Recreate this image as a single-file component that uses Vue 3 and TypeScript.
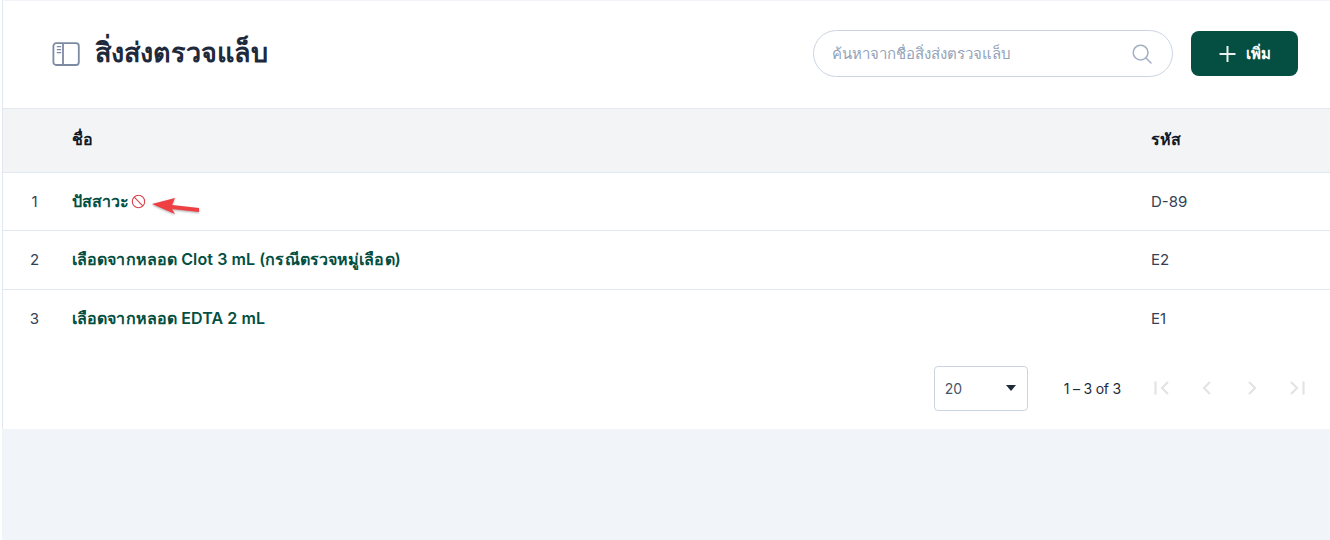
<template>
  <div class="page">
    <section class="card">
      <header class="top">
        <div class="title-wrap">
          <svg class="title-icon" width="28" height="24" viewBox="0 0 28 24" fill="none" stroke="#7c8aa3" stroke-width="1.8">
            <rect x="1.4" y="1.2" width="25.4" height="21.8" rx="2.8" />
            <path d="M11 1.5v21" />
            <path d="M4.8 4.6h4.4M4.8 7.6h4.4M4.8 10.6h4.4" stroke-width="1.2" />
          </svg>
          <h1 class="title">สิ่งส่งตรวจแล็บ</h1>
        </div>
        <div class="actions">
          <div class="search">
            <input class="search-input" type="text" placeholder="ค้นหาจากชื่อสิ่งส่งตรวจแล็บ" />
            <svg width="20" height="20" viewBox="0 0 20 20" fill="none" stroke="#a3afc2" stroke-width="1.5">
              <circle cx="8.6" cy="8.6" r="7.4" />
              <path d="M14 14l5 5" stroke-linecap="round" />
            </svg>
          </div>
          <button class="add-btn" type="button">
            <svg width="17" height="16" viewBox="0 0 17 16" stroke="#e8efec" stroke-width="2" fill="none">
              <path d="M8.5 0v16M0.5 8h16" />
            </svg>
            <span>เพิ่ม</span>
          </button>
        </div>
      </header>

      <table class="grid">
        <thead>
          <tr>
            <th class="col-no"></th>
            <th>ชื่อ</th>
            <th class="col-code">รหัส</th>
          </tr>
        </thead>
        <tbody>
          <tr v-for="(row, i) in rows" :key="row.code">
            <td class="col-no">{{ i + 1 }}</td>
            <td>
              <span class="name">{{ row.name }}</span>
              <span v-if="row.disabled" class="flag">
                <svg width="15" height="15" viewBox="0 0 15 15" fill="none" stroke="#d8404a" stroke-width="1.1">
                  <circle cx="7.5" cy="7.5" r="6.2" />
                  <path d="M3.2 3.2l8.6 8.6" />
                </svg>
                <svg class="arrow" width="50" height="20" viewBox="0 0 50 20">
                  <path d="M0 8L23 2l-3 7 27 3v4l-27-3 3 5z" fill="#ef3f42" />
                </svg>
              </span>
            </td>
            <td class="col-code">{{ row.code }}</td>
          </tr>
        </tbody>
      </table>

      <footer class="pager">
        <div class="size-select">
          <span>20</span>
          <i class="caret"></i>
        </div>
        <span class="range">1 – 3 of 3</span>
        <div class="nav">
          <svg v-for="d in navIcons" :key="d" width="18" height="18" viewBox="0 0 18 18" fill="none" stroke="#e3e3e3" stroke-width="2.2">
            <path :d="d" />
          </svg>
        </div>
      </footer>
    </section>
  </div>
</template>

<script setup lang="ts">
interface Specimen {
  name: string
  code: string
  disabled?: boolean
}

const rows: Specimen[] = [
  { name: 'ปัสสาวะ', code: 'D-89', disabled: true },
  { name: 'เลือดจากหลอด Clot 3 mL (กรณีตรวจหมู่เลือด)', code: 'E2' },
  { name: 'เลือดจากหลอด EDTA 2 mL', code: 'E1' },
]

const navIcons: string[] = [
  'M2.5 2.5v13M15 3L9 9l6 6',
  'M12 3L6 9l6 6',
  'M6 3l6 6-6 6',
  'M3 3l6 6-6 6M15.5 2.5v13',
]
</script>

<style scoped>
.page {
  height: 540px;
  box-sizing: border-box;
  padding-left: 2px;
  background: linear-gradient(#fff, #fff) left / 2px 100% no-repeat, #f1f4f8;
  font-family: Inter, "Noto Sans", Tahoma, sans-serif;
  color: #1e293b;
}

.card {
  height: 429px;
  box-sizing: border-box;
  background: #fff;
  border-top: 1px solid #f1f4f8;
  border-left: 1px solid #e2e8f0;
  display: flex;
  flex-direction: column;
}

.top {
  height: 108px;
  flex: none;
  box-sizing: border-box;
  border-bottom: 1px solid #e2e8f0;
  display: flex;
  align-items: center;
  justify-content: space-between;
  padding: 0 32px 2px 49px;
}

.title-wrap {
  display: flex;
  align-items: center;
  gap: 15px;
}

.title-icon {
  margin-top: 1px;
}

.title {
  margin: 0 0 2px;
  font-size: 27px;
  font-weight: 700;
  line-height: 32px;
  color: #1e293b;
}

.actions {
  display: flex;
  align-items: center;
  gap: 18px;
}

.search {
  width: 360px;
  height: 47px;
  box-sizing: border-box;
  border: 1px solid #cbd5e1;
  border-radius: 24px;
  display: flex;
  align-items: center;
  padding: 0 20px 0 18px;
}

.search-input {
  flex: 1;
  min-width: 0;
  border: 0;
  outline: 0;
  padding: 0;
  background: transparent;
  font: 400 15px Inter, "Noto Sans", Tahoma, sans-serif;
  color: #1e293b;
}

.search-input::placeholder {
  color: #94a3b8;
  opacity: 1;
}

.add-btn {
  width: 107px;
  height: 45px;
  border: 0;
  border-radius: 8px;
  background: #044f41;
  color: #fff;
  display: flex;
  align-items: center;
  justify-content: center;
  gap: 10px;
  font: 600 15px Inter, "Noto Sans", Tahoma, sans-serif;
}

.grid {
  width: 100%;
  border-collapse: collapse;
  table-layout: fixed;
  flex: none;
}

.grid th {
  height: 61px;
  padding: 0 0 2px;
  background: #f3f4f6;
  text-align: left;
  font-size: 16px;
  font-weight: 700;
  color: #111827;
}

.grid td {
  height: 57px;
  padding: 0;
  font-size: 15px;
  border-top: 1px solid #e2e8f0;
  color: #334155;
}

.grid tbody tr:nth-child(2) td {
  height: 57px;
  padding-bottom: 1px;
}

.col-no {
  width: 69px;
  text-align: center;
  padding-right: 6px !important;
  box-sizing: border-box;
}

.col-code {
  width: 179px;
}

.name {
  font-size: 16px;
  font-weight: 600;
  letter-spacing: 0.1px;
  color: #044f41;
}

.flag {
  position: relative;
  display: inline-block;
  width: 15px;
  height: 15px;
  margin-left: 1px;
  vertical-align: -2px;
}

.arrow {
  position: absolute;
  left: 21px;
  top: 2px;
  filter: drop-shadow(0 1px 1px rgba(60, 60, 60, 0.45));
}

.pager {
  flex: 1;
  display: flex;
  align-items: center;
  justify-content: flex-end;
  padding: 0 24px 0 0;
  font-size: 14px;
}

.size-select {
  width: 94px;
  height: 45px;
  box-sizing: border-box;
  border: 1px solid #cbd5e1;
  border-radius: 4px;
  display: flex;
  align-items: center;
  justify-content: space-between;
  padding: 0 11px 0 10px;
  color: #475569;
}

.caret {
  width: 0;
  height: 0;
  border-left: 5.5px solid transparent;
  border-right: 5.5px solid transparent;
  border-top: 6px solid #1e293b;
}

.range {
  margin-left: 36px;
  margin-right: 32px;
  letter-spacing: -0.2px;
  color: #1e293b;
}

.nav {
  display: flex;
  gap: 27px;
}
</style>

<style>
html,
body {
  background: #fff;
}
</style>
